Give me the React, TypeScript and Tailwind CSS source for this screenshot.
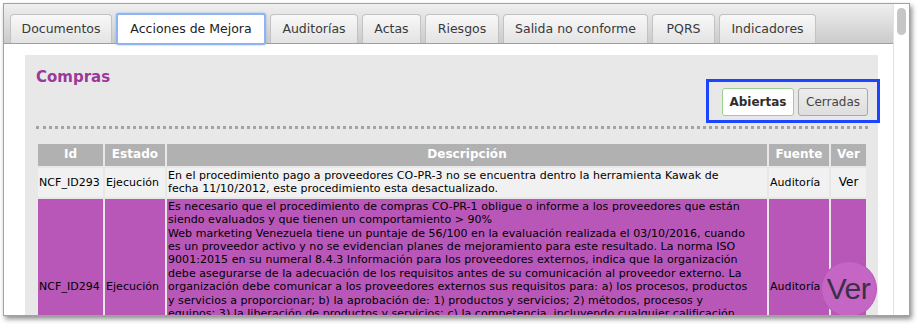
import React from 'react';

const tabs = [
  { label: 'Documentos', w: 'w-[102px]' },
  { label: 'Acciones de Mejora', w: 'w-[150px]', active: true },
  { label: 'Auditorías', w: 'w-[88px]' },
  { label: 'Actas', w: 'w-[59px]' },
  { label: 'Riesgos', w: 'w-[74px]' },
  { label: 'Salida no conforme', w: 'w-[145px]' },
  { label: 'PQRS', w: 'w-[63px]' },
  { label: 'Indicadores', w: 'w-[97px]' },
];

const descLines = [
  'Es necesario que el procedimiento de compras CO-PR-1 obligue o informe a los proveedores que están',
  'siendo evaluados y que tienen un comportamiento > 90%',
  'Web marketing Venezuela tiene un puntaje de 56/100 en la evaluación realizada el 03/10/2016, cuando',
  'es un proveedor activo y no se evidencian planes de mejoramiento para este resultado. La norma ISO',
  '9001:2015 en su numeral 8.4.3 Información para los proveedores externos, indica que la organización',
  'debe asegurarse de la adecuación de los requisitos antes de su comunicación al proveedor externo. La',
  'organización debe comunicar a los proveedores externos sus requisitos para: a) los procesos, productos',
  'y servicios a proporcionar; b) la aprobación de: 1) productos y servicios; 2) métodos, procesos y',
  'equipos; 3) la liberación de productos y servicios; c) la competencia, incluyendo cualquier calificación',
  'requerida de las personas; d) las interacciones del proveedor externo con la organización; e) el',
  'control y el seguimiento del desempeño de los proveedores externos a aplicar por la organización; f)',
  'las actividades de verificación o validación que la organización, o su cliente, pretende llevar a',
  'cabo en las instalaciones de los proveedores externos.',
];

export default function App() {
  return (
    <div className="w-[922px] h-[329px] bg-white overflow-hidden pt-[3px] pl-[3px] font-['DejaVu_Sans',sans-serif]">
      {/* Window */}
      <div className="w-[907px] h-[313px] flex border border-[#a2a2a2] bg-white shadow-[2px_3px_5px_rgba(0,0,0,0.45)] overflow-hidden">
        <div className="w-[889px] flex flex-col">
          {/* Tab strip */}
          <div className="h-[40px] shrink-0 bg-gradient-to-b from-[#efefef] to-[#cbcbcb] border-b border-[#9e9e9e] flex items-end gap-[4px] pl-[6px]">
            {tabs.map((t) =>
              t.active ? (
                <div
                  key={t.label}
                  className={`${t.w} h-[32px] -mb-[2px] relative z-10 flex items-center justify-center bg-white border-2 border-[#8fb4f2] rounded-[3px] shadow-[0_0_2px_rgba(80,140,240,0.6)] text-[12.5px] text-[#222]`}
                >
                  {t.label}
                </div>
              ) : (
                <div
                  key={t.label}
                  className={`${t.w} h-[29px] flex items-center justify-center bg-gradient-to-b from-[#f8f8f8] to-[#e3e3e3] border border-b-0 border-[#c2c2c2] rounded-t-[4px] text-[12.5px] text-[#3a3a3a]`}
                >
                  {t.label}
                </div>
              )
            )}
          </div>

          {/* Content */}
          <div className="flex-1 bg-white pl-[21px] pr-[15px] pt-[11px]">
            <div className="bg-[#e8e8e8] pl-[11px] pr-[10px] pt-[12px] pb-4">
              <h2 className="text-[15px] leading-[20px] font-bold text-[#9a399a]">Compras</h2>

              <div className="flex justify-end mt-[1px]">
                <div className="relative flex gap-[4px]">
                  <div className="absolute -left-[16px] -right-[12px] -top-[9px] -bottom-[7px] border-[3px] border-[#1d44ff]" />
                  <button className="w-[72px] h-[28px] bg-white border border-[#9fd08f] rounded-[3px] text-[12px] font-bold text-[#2e2e2e]">
                    Abiertas
                  </button>
                  <button className="w-[70px] h-[28px] bg-gradient-to-b from-[#ededed] to-[#dedede] border border-[#a8a8a8] rounded-[3px] text-[12px] text-[#444]">
                    Cerradas
                  </button>
                </div>
              </div>

              <div className="mt-[10px] border-b-[3px] border-dotted border-[#a3a3a3]" />

              <table className="mt-[13px] w-[832px] border-separate border-spacing-[2px] text-[11px] leading-[13.4px] tracking-[0.05px] text-black">
                <thead>
                  <tr className="bg-[#b1b1b1] text-white text-[12px] font-bold h-[22px]">
                    <th className="w-[65px]">Id</th>
                    <th className="w-[60px]">Estado</th>
                    <th className="w-[600px]">Descripción</th>
                    <th className="w-[60px]">Fuente</th>
                    <th className="w-[35px]">Ver</th>
                  </tr>
                </thead>
                <tbody>
                  <tr className="bg-[#f1f1f1]">
                    <td className="px-[1px] py-[1px] align-middle whitespace-nowrap">NCF_ID293</td>
                    <td className="px-[1px] align-middle">Ejecución</td>
                    <td className="px-[1px] py-[1px]">
                      <span className="block whitespace-nowrap">En el procedimiento pago a proveedores CO-PR-3 no se encuentra dentro la herramienta Kawak de</span>
                      <span className="block whitespace-nowrap">fecha 11/10/2012, este procedimiento esta desactualizado.</span>
                    </td>
                    <td className="px-[1px] align-middle">Auditoría</td>
                    <td className="text-center text-[12px] align-middle">Ver</td>
                  </tr>
                  <tr className="bg-[#b857b8]">
                    <td className="px-[1px] align-middle whitespace-nowrap">NCF_ID294</td>
                    <td className="px-[1px] align-middle">Ejecución</td>
                    <td className="px-[1px] py-[1px]">
                      {descLines.map((l, i) => (
                        <span key={i} className="block whitespace-nowrap">{l}</span>
                      ))}
                    </td>
                    <td className="px-[1px] align-middle">Auditoría</td>
                    <td className="relative align-middle">
                      <div className="absolute z-10 left-1/2 top-1/2 -translate-x-1/2 -translate-y-[calc(50%-2px)] w-[56px] h-[56px] rounded-full bg-[#c566c5] border border-[#b458b4] flex items-center justify-center">
                        <span className="font-['Liberation_Sans',sans-serif] text-[30px] leading-none tracking-[-0.5px] text-[#3a3048]">Ver</span>
                      </div>
                    </td>
                  </tr>
                </tbody>
              </table>
            </div>
          </div>
        </div>

        {/* Scrollbar */}
        <div className="w-[16px] shrink-0 bg-white border-l border-[#e2e2e2]">
          <div className="mx-auto mt-[4px] w-[9px] h-[27px] rounded-full bg-[#c6c6c6]" />
        </div>
      </div>
    </div>
  );
}
